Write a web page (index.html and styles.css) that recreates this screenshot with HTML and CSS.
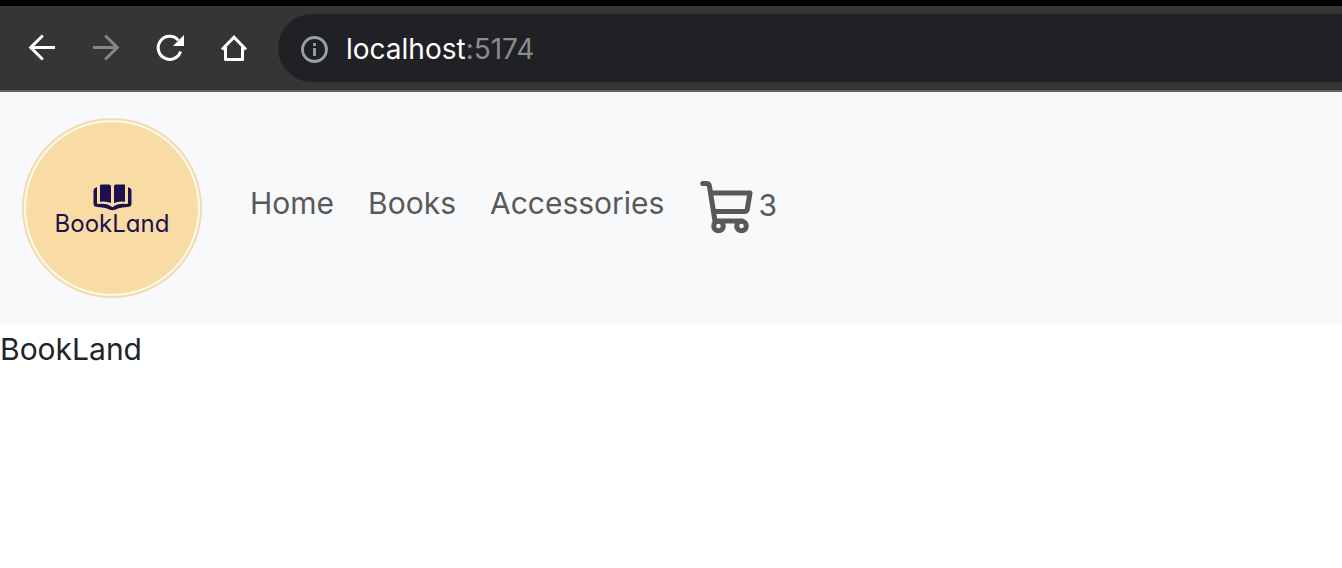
FILE: index.html
```html
<!DOCTYPE html>
<html lang="en">
<head>
<meta charset="utf-8">
<meta name="viewport" content="width=device-width, initial-scale=1">
<title>BookLand</title>
<link rel="stylesheet" href="styles.css">
</head>
<body>
<header class="browser-bar">
  <div class="browser-buttons">
    <button class="icon-button" type="button" aria-label="Back">
      <svg viewBox="0 0 32 32" fill="none" stroke="currentColor" stroke-width="3"><path d="M29 15.500H5M16.800 3.500 4.700 15.500 16.800 27.500"/></svg>
    </button>
    <button class="icon-button icon-button-muted" type="button" aria-label="Forward">
      <svg viewBox="0 0 32 32" fill="none" stroke="currentColor" stroke-width="3"><path d="M3 15.500H27M15.200 3.500 27.300 15.500 15.200 27.500"/></svg>
    </button>
    <button class="icon-button" type="button" aria-label="Reload">
      <svg viewBox="0 0 32 32" fill="none" stroke="currentColor" stroke-width="3"><path d="M26.600 19.500A11.500 11.500 0 1 1 24.300 8.200"/><path d="M30 3V14H19Z" fill="currentColor" stroke="none"/></svg>
    </button>
    <button class="icon-button" type="button" aria-label="Home page">
      <svg viewBox="0 0 32 32" fill="none" stroke="currentColor" stroke-width="3" stroke-linejoin="round"><path d="M4 17.500 16 5.200 28 17.500" stroke-linejoin="miter"/><path d="M7.500 15V27.500H24.500V15"/></svg>
    </button>
  </div>
  <div class="address">
    <svg class="info-icon" viewBox="0 0 28 28" fill="none" stroke="currentColor" stroke-width="2.800"><circle cx="14.500" cy="14.500" r="12"/><path d="M14.500 13V21M14.500 8V11"/></svg>
    <span class="host">localhost<span class="port">:5174</span></span>
  </div>
</header>
<nav class="navbar">
  <a class="brand" href="#" aria-label="BookLand home">
    <svg class="book" viewBox="0 0 40 28" fill="currentColor">
      <path d="M8 1Q8 .500 10 .500H17Q19 .500 19 2.500V19Q14 16.800 8 17.800ZM33 .500V17.800Q27 16.800 22 19V2.500Q22 .500 24 .500Z"/>
      <path d="M5 3.200V19Q5 20.200 7 20Q15 19 20.300 23.200Q26 19 34 20Q36 20.200 36 19V3.200Q39.500 4 39.500 7V20Q39.500 22.500 37 22.800L31 23.400Q26 23.800 23.800 25.500Q20.500 27 17.200 25.500Q15 23.800 10 23.400L4 22.800Q1.500 22.500 1.500 20V7Q1.500 4 5 3.200Z"/>
    </svg>
    <span class="brand-name">BookLand</span>
  </a>
  <a class="nav-link" href="#">Home</a>
  <a class="nav-link" href="#">Books</a>
  <a class="nav-link" href="#">Accessories</a>
  <a class="nav-link cart" href="#" aria-label="Cart, 3 items">
    <svg class="cart-icon" viewBox="0 0 56 56" fill="none" stroke="currentColor" stroke-width="5" stroke-linecap="round" stroke-linejoin="round"><path d="M4.700 3.500H8.500Q11 3.500 11.400 6L17 41H44M13 13H52L49.300 29Q49 31.500 46.500 31.500H16"/><circle cx="20.500" cy="46" r="4.800"/><circle cx="43.500" cy="46" r="4.800"/></svg>
    <span>3</span>
  </a>
</nav>
<main class="content">BookLand</main>
</body>
</html>
```
FILE: styles.css
```css
* {
  box-sizing: border-box;
}

body {
  margin: 0;
  background: #fff;
  color: #212529;
  font: 30px/50px Inter, "Liberation Sans", sans-serif;
}

.browser-bar {
  display: flex;
  align-items: center;
  gap: 28px;
  padding: 8px 0 8px 26px;
  background: #353535;
  border-top: 6px solid #000;
  border-bottom: 2px solid #626262;
}

.browser-buttons {
  display: flex;
  gap: 32px;
}

.icon-button {
  display: flex;
  padding: 0;
  border: 0;
  background: none;
  color: #fff;
}

.icon-button svg {
  width: 32px;
  height: 32px;
}

.icon-button-muted {
  color: #868686;
}

.address {
  display: flex;
  flex: 1;
  align-items: center;
  gap: 18px;
  padding: 10px 22px 8px;
  background: #202124;
  border-radius: 34px 0 0 34px;
}

.info-icon {
  width: 28px;
  height: 28px;
  color: #9aa0a6;
}

.host {
  color: #fff;
  font-size: 28px;
}

.port {
  color: #8c8c8c;
}

.navbar {
  display: flex;
  align-items: center;
  gap: 34px;
  padding: 26px 22px;
  background: #f8f9fb;
}

.brand {
  display: flex;
  flex-direction: column;
  align-items: center;
  justify-content: center;
  width: 180px;
  height: 180px;
  margin-right: 14px;
  border: 2px solid #f8dca3;
  border-radius: 50%;
  padding: 2px;
  background: #f8dca3 content-box;
  color: #1d1050;
  text-decoration: none;
}

.book {
  width: 40px;
  height: 28px;
  margin-top: 4px;
}

.brand-name {
  font-size: 24px;
  font-feature-settings: "cv11";
  line-height: 24px;
}

.nav-link {
  color: #585959;
  margin-bottom: 10px;
  text-decoration: none;
}

.cart {
  display: flex;
  align-items: flex-start;
  gap: 4px;
  margin-bottom: 0;
}

.cart-icon {
  width: 56px;
  height: 56px;
}

.content {
  padding-bottom: 32px;
}
```
